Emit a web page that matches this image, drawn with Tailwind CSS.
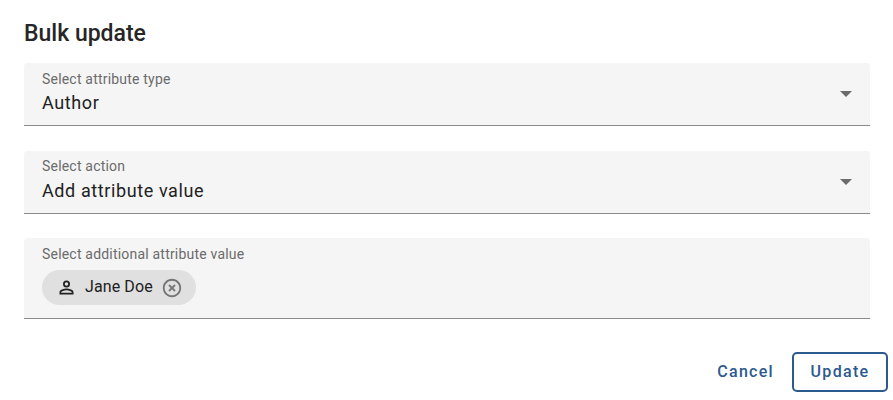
<!DOCTYPE html>
<html>
<head>
<meta charset="utf-8">
<title>Bulk update</title>
<script src="https://cdn.jsdelivr.net/npm/@tailwindcss/browser@4"></script>
</head>
<body class="bg-white font-['Roboto',sans-serif] overflow-hidden">
<div class="w-[893px] h-[400px] pl-6 pr-[5px] pt-[21px]">
    <h2 class="text-[23px] leading-[26px] font-medium text-[#262626]">Bulk update</h2>

    <div class="w-[846px] mt-[16px] flex flex-col gap-[25px]">
        <div class="h-[63px] bg-[#f5f5f5] rounded-t border-b border-[#8a8a8a] pl-[18px] pr-[18px] flex items-center justify-between">
            <div>
                <div class="text-[14px] leading-[17px] tracking-[0.2px] text-[#6b6b6b] -mt-[1px] mb-[1px]">Select attribute type</div>
                <div class="text-[18px] leading-[26px] tracking-[0.6px] text-[#212121] pt-[1px]">Author</div>
            </div>
            <div class="w-0 h-0 border-x-[6px] border-x-transparent border-t-[6px] border-t-[#6b6b6b] -ml-[1px]"></div>
        </div>

        <div class="h-[63px] bg-[#f5f5f5] rounded-t border-b border-[#8a8a8a] pl-[18px] pr-[18px] flex items-center justify-between">
            <div>
                <div class="text-[14px] leading-[17px] tracking-[0.2px] text-[#6b6b6b] -mt-[2px] mb-[2px]">Select action</div>
                <div class="text-[18px] leading-[26px] tracking-[0.6px] text-[#212121] pt-[1px]">Add attribute value</div>
            </div>
            <div class="w-0 h-0 border-x-[6px] border-x-transparent border-t-[6px] border-t-[#6b6b6b] -ml-[1px]"></div>
        </div>
    </div>

    <div class="w-[846px] h-[81px] mt-[24px] bg-[#f5f5f5] rounded-t border-b border-[#8a8a8a] pl-[18px] pt-[8px]">
        <div class="text-[14px] leading-[17px] tracking-[0.2px] text-[#6b6b6b]">Select additional attribute value</div>
        <div class="mt-[7px] inline-flex items-center h-[35px] rounded-full bg-[#e0e0e0] pl-[14px] pr-[13px]">
            <svg xmlns="http://www.w3.org/2000/svg" viewBox="0 0 24 24" fill="#212121" class="w-[21px] h-[21px] -ml-[0.5px] -mt-[1px]">
                <path d="M12 6a2 2 0 1 1 0 4 2 2 0 0 1 0-4m0 9c2.7 0 5.8 1.29 6 2v1H6v-.99c.2-.72 3.3-2.01 6-2.01M12 4a4 4 0 1 0 0 8 4 4 0 0 0 0-8zm0 9c-2.67 0-8 1.34-8 4v3h16v-3c0-2.66-5.33-4-8-4z"/>
            </svg>
            <span class="ml-[8.5px] text-[16px] leading-[20px] tracking-[0.1px] text-[#212121] -mt-[1px]">Jane Doe</span>
            <svg xmlns="http://www.w3.org/2000/svg" viewBox="0 0 24 24" fill="#757575" class="ml-[8px] w-[22px] h-[22px]">
                <path d="M14.59 8 12 10.59 9.41 8 8 9.41 10.59 12 8 14.59 9.41 16 12 13.41 14.59 16 16 14.59 13.41 12 16 9.41 14.59 8zM12 2C6.47 2 2 6.47 2 12s4.47 10 10 10 10-4.47 10-10S17.53 2 12 2zm0 18c-4.41 0-8-3.59-8-8s3.59-8 8-8 8 3.59 8 8-3.59 8-8 8z"/>
            </svg>
        </div>
    </div>

    <div class="flex justify-end items-center mt-[33px] gap-[18px]">
        <button class="text-[16px] font-medium tracking-[1.3px] text-[#2c5a8f] -mt-[1px]">Cancel</button>
        <button class="w-[96px] h-[40px] border-2 border-[#2c5a8f] rounded-[5px] text-[16px] font-medium tracking-[1.3px] text-[#2c5a8f] pb-[1px]">Update</button>
    </div>
</div>
</body>
</html>
